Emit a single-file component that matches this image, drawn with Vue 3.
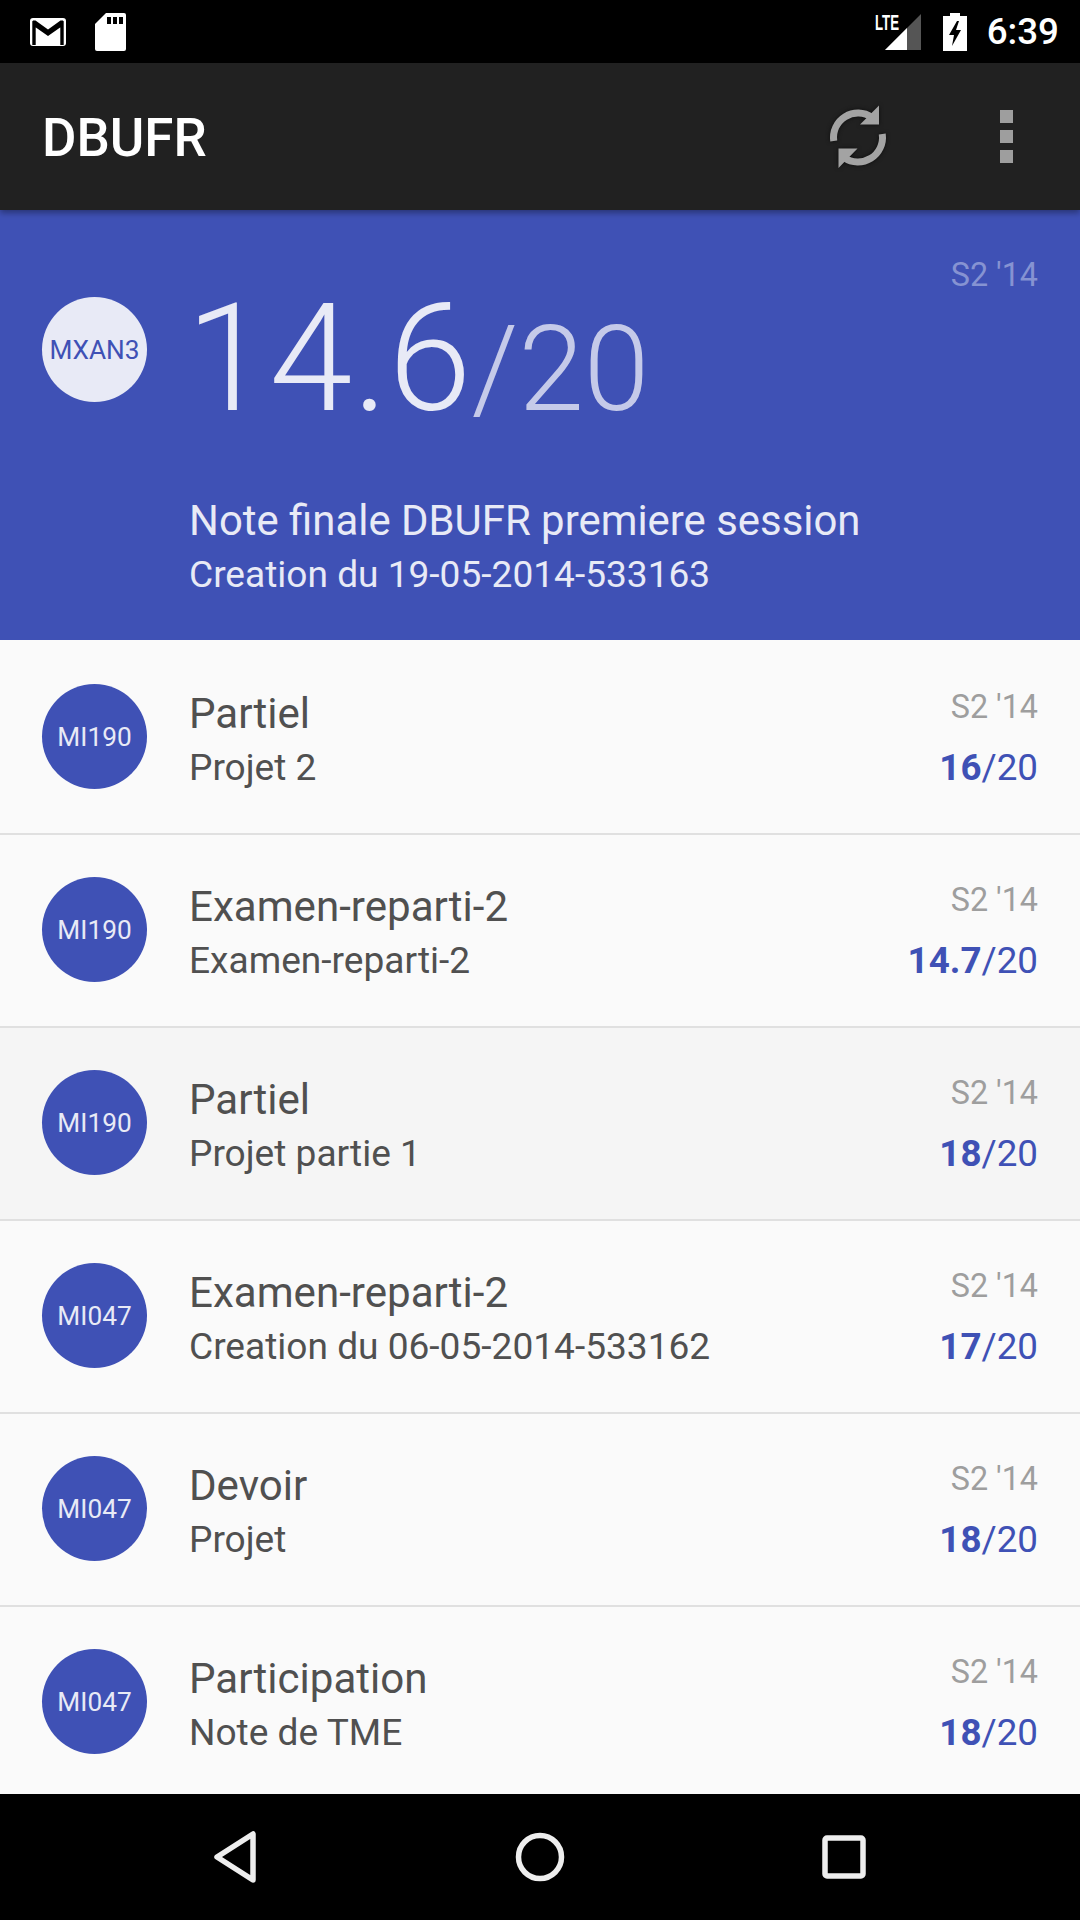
<template>
  <div class="phone">
    <!-- status bar -->
    <div class="status">
      <svg class="ic-mail" viewBox="0 0 38 30" width="38" height="30">
        <rect x="1" y="1" width="36" height="28" rx="3" fill="#fff" />
        <path d="M5 28V7l14 10L33 7v21" fill="none" stroke="#000" stroke-width="3.4" stroke-linejoin="miter" />
        <path d="M4 3.5h2.5L19 12.5l12.500-9H34v2L19 16.500 4 5.500z" fill="#000" />
      </svg>
      <svg class="ic-sd" viewBox="0 0 31 38" width="31" height="38">
        <path d="M11 0h18a2 2 0 0 1 2 2v34a2 2 0 0 1-2 2H2a2 2 0 0 1-2-2V11z" fill="#fff" />
        <path d="M12 4h4v7h-4zM18 4h4v7h-4zM24 4h4v7h-4z" fill="#000" />
      </svg>
      <div class="status-right">
        <svg class="ic-signal" viewBox="-2 -3 48 44" width="48" height="44">
          <text x="0" y="17" textLength="24" lengthAdjust="spacingAndGlyphs" class="lte">LTE</text>
          <path d="M46 1v36H10z" fill="#555" />
          <path d="M32 15v22H10z" fill="#fff" />
        </svg>
        <svg class="ic-battery" viewBox="0 0 24 38" width="24" height="38">
          <path d="M7 0h10v3h7v35H0V3h7z" fill="#fff" />
          <path d="M14 8L6 22h5l-2 11 9-16h-5l3-9z" fill="#000" />
        </svg>
        <span class="time">6:39</span>
      </div>
    </div>

    <!-- toolbar -->
    <div class="toolbar">
      <span class="app-title">DBUFR</span>
      <svg class="ic-sync" viewBox="0 0 64 68" width="64" height="68">
        <g fill="none" stroke="#a3a3a3" stroke-width="7">
          <path d="M7.750 38A24.500 24.500 0 0 1 46 14.400" />
          <path d="M56.250 31A24.500 24.500 0 0 1 18 54.600" />
        </g>
        <path d="M53 2.500v19H34zM12.500 45.500h19l-19 19.500z" fill="#a3a3a3" />
      </svg>
      <div class="dots">
        <span></span>
        <span></span>
        <span></span>
      </div>
    </div>

    <!-- moyenne -->
    <div class="hero">
      <div class="hero-top">
        <div class="avatar avatar-light">MXAN3</div>
        <div class="big-score">14.6<span>/20</span></div>
        <div class="hero-date">S2 '14</div>
      </div>
      <div class="hero-title">Note finale DBUFR premiere session</div>
      <div class="hero-sub">Creation du 19-05-2014-533163</div>
    </div>

    <!-- liste des notes -->
    <div class="list">
      <div v-for="(n, i) in notes" :key="i" class="row" :class="{ active: n.active }">
        <div class="avatar">{{ n.code }}</div>
        <div class="texts">
          <div class="title">{{ n.title }}</div>
          <div class="sub">{{ n.sub }}</div>
        </div>
        <div class="right">
          <div class="date">S2 '14</div>
          <div class="score"><b>{{ n.score }}</b>/20</div>
        </div>
      </div>
    </div>

    <!-- navigation -->
    <div class="nav">
      <svg viewBox="0 0 48 54" width="48" height="54">
        <path d="M41 4v46L5 27z" fill="none" stroke="#eee" stroke-width="5.500" stroke-linejoin="round" />
      </svg>
      <svg viewBox="0 0 54 54" width="54" height="54">
        <circle cx="27" cy="27" r="21.500" fill="none" stroke="#eee" stroke-width="5.500" />
      </svg>
      <svg viewBox="0 0 48 54" width="48" height="54">
        <rect x="5" y="8" width="38" height="38" rx="2" fill="none" stroke="#eee" stroke-width="5.500" />
      </svg>
    </div>
  </div>
</template>

<script setup>
const notes = [
  { code: 'MI190', title: 'Partiel', sub: 'Projet 2', score: '16' },
  { code: 'MI190', title: 'Examen-reparti-2', sub: 'Examen-reparti-2', score: '14.7' },
  { code: 'MI190', title: 'Partiel', sub: 'Projet partie 1', score: '18', active: true },
  { code: 'MI047', title: 'Examen-reparti-2', sub: 'Creation du 06-05-2014-533162', score: '17' },
  { code: 'MI047', title: 'Devoir', sub: 'Projet', score: '18' },
  { code: 'MI047', title: 'Participation', sub: 'Note de TME', score: '18' }
];
</script>

<style>
html,
body {
  margin: 0;
  background: #000;
}
</style>

<style scoped>
.phone {
  width: 1080px;
  height: 1920px;
  display: flex;
  flex-direction: column;
  overflow: hidden;
  font-family: Roboto, "Liberation Sans", sans-serif;
  background: #fafafa;
}

.status {
  height: 63px;
  flex: none;
  background: #000;
  display: flex;
  align-items: center;
  padding: 0 21px 0 29px;
}
.ic-sd {
  margin-left: 28px;
}
.status-right {
  margin-left: auto;
  display: flex;
  align-items: center;
}
.lte {
  font-family: "Liberation Sans", sans-serif;
  font-weight: 700;
  font-size: 22px;
  fill: #fff;
}
.ic-battery {
  margin-left: 22px;
}
.time {
  margin-left: 20px;
  color: #fff;
  font-size: 36.750px;
  font-weight: 500;
}

.toolbar {
  height: 147px;
  flex: none;
  background: #212121;
  display: flex;
  align-items: center;
  padding: 0 67px 0 42px;
  box-shadow: 0 3px 6px rgba(0, 0, 0, 0.35);
  position: relative;
  z-index: 1;
}
.app-title {
  color: #fff;
  font-size: 52.800px;
  font-weight: 500;
  padding-top: 2px;
}
.ic-sync {
  margin-left: auto;
  margin-right: 110px;
  filter: drop-shadow(0 0 2px #0c0c0c);
}
.dots {
  display: flex;
  flex-direction: column;
  gap: 7px;
}
.dots span {
  width: 13px;
  height: 13px;
  background: #9e9e9e;
}

.hero {
  height: 430px;
  flex: none;
  box-sizing: border-box;
  background: #3f51b5;
  padding: 46px 42px 0;
  color: #e8eaf6;
}
.hero-top {
  display: flex;
  align-items: flex-start;
  height: 237px;
}
.avatar {
  width: 105px;
  height: 105px;
  flex: none;
  border-radius: 50%;
  background: #3f51b5;
  color: #e8eaf6;
  display: flex;
  align-items: center;
  justify-content: center;
  font-size: 26.250px;
}
.avatar-light {
  margin-top: 41px;
  background: #e8eaf6;
  color: #3f51b5;
}
.big-score {
  margin-left: 39px;
  margin-top: 18px;
  font-size: 150px;
  font-weight: 300;
  line-height: 170px;
}
.big-score span {
  font-size: 118px;
  color: #c5cae9;
}
.hero-date {
  margin-left: auto;
  font-size: 32.300px;
  color: #8693d2;
}
.hero-title {
  margin-left: 147px;
  font-size: 41.900px;
  line-height: 56px;
}
.hero-sub {
  margin-left: 147px;
  font-size: 37.100px;
  line-height: 52px;
}

.list {
  flex: 1;
  min-height: 0;
  overflow: hidden;
}
.row {
  height: 193px;
  box-sizing: border-box;
  display: flex;
  align-items: center;
  padding: 0 42px;
  background: #fafafa;
}
.row + .row {
  box-shadow: inset 0 2px 0 #e0e0e0;
}
.row.active {
  background: #f5f5f5;
}
.texts {
  margin-left: 42px;
  flex: 1;
  color: #505050;
  padding-top: 7px;
}
.title {
  font-size: 42.100px;
  line-height: 56px;
}
.sub {
  font-size: 37.100px;
  line-height: 52px;
}
.right {
  text-align: right;
  padding-top: 6px;
}
.date {
  font-size: 32.300px;
  color: #9e9e9e;
  line-height: 44px;
}
.score {
  margin-top: 13px;
  font-size: 36.750px;
  line-height: 52px;
  color: #3f51b5;
}
.score b {
  font-weight: 700;
}

.nav {
  height: 126px;
  flex: none;
  background: #000;
  display: flex;
  align-items: center;
  justify-content: space-between;
  padding: 0 212px 0 212px;
}
</style>
